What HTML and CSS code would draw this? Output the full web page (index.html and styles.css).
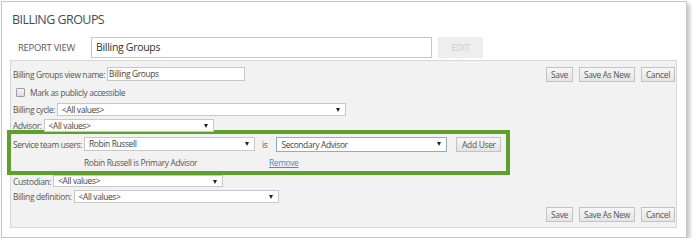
FILE: index.html
```html
<!DOCTYPE html>
<html lang="en">
<head>
    <meta charset="UTF-8">
    <title>Billing Groups</title>
    <link rel="stylesheet" href="styles.css">
</head>
<body>
    <div class="card">
        <h1 class="title">BILLING GROUPS</h1>

        <div class="report-row">
            <span class="report-label">REPORT VIEW</span>
            <div class="report-input">Billing Groups</div>
            <button class="edit-btn">EDIT</button>
        </div>

        <div class="panel">
            <div class="row row-top">
                <div class="field">
                    <span class="label">Billing Groups view name:</span>
                    <div class="text-input name-input">Billing Groups</div>
                </div>
                <div class="actions">
                    <button class="btn">Save</button>
                    <button class="btn">Save As New</button>
                    <button class="btn">Cancel</button>
                </div>
            </div>

            <div class="row row-check">
                <span class="checkbox"></span>
                <span class="label">Mark as publicly accessible</span>
            </div>

            <div class="row row-cycle">
                <span class="label">Billing cycle:</span>
                <div class="select w-cycle">&lt;All values&gt;</div>
            </div>

            <div class="row row-advisor">
                <span class="label">Advisor:</span>
                <div class="select w-advisor">&lt;All values&gt;</div>
            </div>

            <!-- highlighted block -->
            <div class="service">
                <div class="row service-row">
                    <span class="label">Service team users:</span>
                    <div class="select w-user">Robin Russell</div>
                    <span class="label is">is</span>
                    <div class="select w-role focused">Secondary Advisor</div>
                    <button class="btn add-btn">Add User</button>
                </div>
                <div class="row service-note">
                    <span class="note">Robin Russell is Primary Advisor</span>
                    <a href="#" class="remove">Remove</a>
                </div>
            </div>

            <div class="row row-custodian">
                <span class="label">Custodian:</span>
                <div class="select w-custodian">&lt;All values&gt;</div>
            </div>

            <div class="row row-definition">
                <span class="label">Billing definition:</span>
                <div class="select w-definition">&lt;All values&gt;</div>
            </div>

            <div class="row row-bottom">
                <div class="actions">
                    <button class="btn">Save</button>
                    <button class="btn">Save As New</button>
                    <button class="btn">Cancel</button>
                </div>
            </div>
        </div>
    </div>
</body>
</html>
```

FILE: styles.css
```css
* {
    margin: 0;
    padding: 0;
    box-sizing: border-box;
}

body {
    font-family: 'Open Sans', 'Noto Sans', sans-serif;
    background: #ffffff;
    color: #555555;
}

.card {
    margin: 1px 0 0 1px;
    width: 686px;
    height: 237px;
    border: 1px solid #c4c4c4;
    box-shadow: 3px 3px 4px rgba(0, 0, 0, 0.22);
    padding: 10px 9px 0 8px;
}

.title {
    font-size: 12.5px;
    font-weight: 400;
    line-height: 16px;
    color: #3f4d5b;
    margin-left: 2px;
    letter-spacing: -0.55px;
}

.report-row {
    display: flex;
    align-items: center;
    height: 21px;
    margin-top: 9px;
}

.report-label {
    font-size: 9.5px;
    color: #5a5a5a;
    margin-left: 8px;
    width: 73px;
    letter-spacing: -0.3px;
}

.report-input {
    width: 341px;
    height: 21px;
    border: 1px solid #c6c6c6;
    background: #fff;
    font-size: 10.5px;
    line-height: 19px;
    padding-left: 4px;
    color: #333;
    letter-spacing: -0.3px;
}

.edit-btn {
    width: 45px;
    height: 21px;
    margin-left: 6px;
    border: none;
    background: #eeeeee;
    color: #cbcbcb;
    font-family: inherit;
    font-size: 9px;
    letter-spacing: -0.3px;
}

.panel {
    margin-top: 2px;
    height: 168px;
    background: #f2f2f2;
    border: 1px solid #d8d8d8;
    padding: 6px 1px 0 2px;
}

.row {
    display: flex;
    align-items: center;
}

.label {
    font-size: 8.4px;
    color: #555;
    white-space: nowrap;
    letter-spacing: -0.35px;
}

.field {
    display: flex;
    align-items: center;
}

.row-top {
    height: 15px;
    justify-content: space-between;
    align-items: flex-start;
}

.text-input {
    height: 14px;
    border: 1px solid #c8c8c8;
    background: #fff;
    font-size: 8.4px;
    line-height: 12px;
    padding-left: 1px;
    color: #444;
    margin-left: 2px;
    letter-spacing: -0.35px;
}

.name-input {
    width: 138px;
}

.actions {
    display: flex;
    gap: 6px;
}

.btn {
    height: 15px;
    padding: 0 4px;
    border: 1px solid #c3c3c3;
    background: linear-gradient(#f7f7f7, #e4e4e4);
    color: #555;
    font-family: inherit;
    font-size: 8.4px;
    letter-spacing: -0.3px;
    line-height: 13px;
    white-space: nowrap;
}

.row-check {
    height: 12px;
    margin-top: 4px;
}

.checkbox {
    width: 9px;
    height: 9px;
    margin: 0 5px 0 3px;
    border: 1px solid #9e9e9e;
    border-radius: 1px;
    background: linear-gradient(#f4f4f4, #dcdcdc);
}

.select {
    position: relative;
    height: 13px;
    border: 1px solid #c8c8c8;
    background: #fff;
    font-size: 8.4px;
    line-height: 11px;
    padding-left: 4px;
    color: #444;
    margin-left: 2px;
    letter-spacing: -0.35px;
}

/* dropdown arrow */
.select::after {
    content: '';
    position: absolute;
    right: 5px;
    top: 4px;
    border-left: 2.5px solid transparent;
    border-right: 2.5px solid transparent;
    border-top: 4px solid #222;
}

.row-cycle {
    height: 13px;
    margin-top: 5px;
}

.w-cycle {
    width: 289px;
}

.row-advisor {
    height: 13px;
    margin-top: 3px;
}

.w-advisor {
    width: 170px;
}

.service {
    margin: 2px 0 0 -2px;
    width: 495px;
    height: 37px;
    padding: 2px 0 0 2px;
    outline: 4px solid #5f9f2b;
}

.service-row {
    height: 16px;
}

.w-user {
    width: 171px;
    height: 14px;
}

.is {
    margin: 0 7px 0 7px;
}

.w-role {
    width: 171px;
    height: 15px;
    line-height: 13px;
}

.focused {
    border-color: #86ace0;
}

.add-btn {
    margin-left: 9px;
    width: 45px;
    height: 15px;
}

.service-note {
    height: 14px;
    margin-top: 3px;
}

.note {
    font-size: 8.4px;
    color: #555;
    margin-left: 71px;
    width: 185px;
    letter-spacing: -0.35px;
}

.remove {
    font-size: 8.4px;
    color: #4a8cc4;
    letter-spacing: -0.35px;
}

.row-custodian {
    height: 12px;
    margin-top: 4px;
}

.w-custodian {
    width: 170px;
    height: 12px;
    line-height: 10px;
}

.row-definition {
    height: 13px;
    margin-top: 3px;
}

.w-definition {
    width: 205px;
}

.row-bottom {
    height: 15px;
    margin-top: 4px;
    justify-content: flex-end;
}
```
